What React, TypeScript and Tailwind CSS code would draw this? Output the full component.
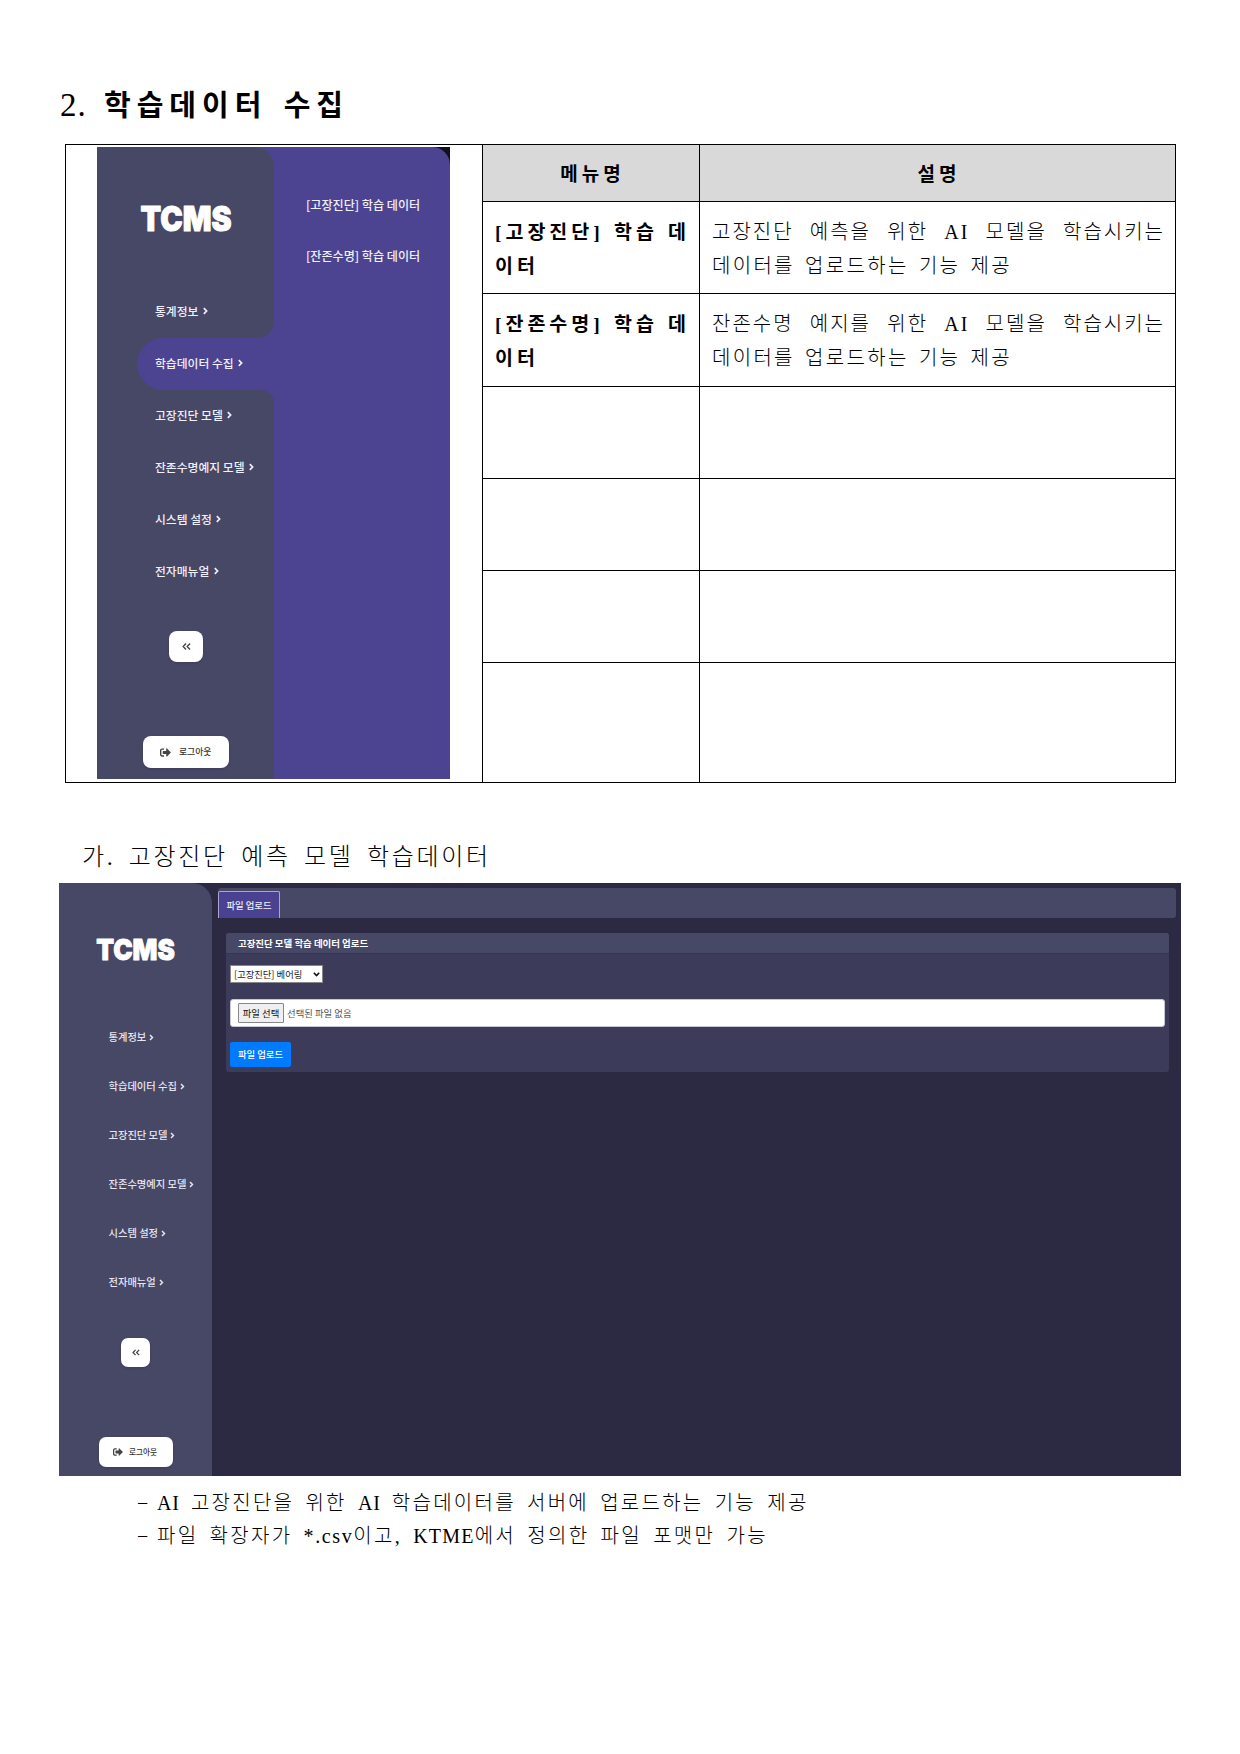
import React from "react";
import { FaSignOutAlt } from "react-icons/fa";

const MENU = ["통계정보", "학습데이터 수집", "고장진단 모델", "잔존수명예지 모델", "시스템 설정", "전자매뉴얼"];

function Chevron({ className }: { className: string }) {
  return (
    <svg viewBox="0 0 5 8" className={className} fill="none" stroke="currentColor" strokeWidth="1.7">
      <path d="M0.8 1.2 L3.6 4 L0.8 6.8" />
    </svg>
  );
}

function DoubleChevron({ className }: { className: string }) {
  return (
    <svg viewBox="0 0 9 7" className={className} fill="none" stroke="#444" strokeWidth="1.4">
      <path d="M4 0.6 L1.2 3.5 L4 6.4 M8 0.6 L5.2 3.5 L8 6.4" />
    </svg>
  );
}

function Logo({ className }: { className: string }) {
  return (
    <svg viewBox="0 0 96 44" className={`overflow-visible ${className}`}>
      <text
        x="2.5"
        y="34.5"
        textLength="91"
        lengthAdjust="spacingAndGlyphs"
        fill="#fff"
        stroke="#fff"
        strokeWidth="1"
        strokeLinejoin="round"
        fontFamily="Inter"
        fontWeight="900"
        fontSize="33.5"
      >
        TCMS
      </text>
    </svg>
  );
}

function MenuCapture() {
  return (
    <div className="ml-[31px] mt-[2px] flex h-[632px] w-[353px] bg-[#11111d] font-['Noto_Sans_CJK_KR',sans-serif]">
      <div className="flex h-full w-full rounded-tr-[18px] bg-[#4c4491]">
        <div className="flex h-full w-[177px] shrink-0 flex-col">
          <div className="h-[191px] rounded-tr-[20px] rounded-br-[16px] bg-[#474766] pl-[41px] pt-[49px]">
            <Logo className="h-[44px] w-[96px]" />
            <div className="mt-[61px] flex h-[20px] items-center gap-[4.5px] pl-[17px] text-[11.8px] font-medium leading-none text-[#f0f0fa]">
              {MENU[0]}
              <Chevron className="h-[8px] w-[5px]" />
            </div>
          </div>
          <div className="h-[52px] bg-[#474766]">
            <div className="ml-[40px] flex h-[52px] items-center gap-[4.5px] rounded-l-full bg-[#4c4491] pb-[2px] pl-[18px] text-[11.8px] font-medium leading-none text-[#f0f0fa]">
              {MENU[1]}
              <Chevron className="h-[8px] w-[5px]" />
            </div>
          </div>
          <div className="flex-1 rounded-tr-[14px] bg-[#474766]">
            {MENU.slice(2).map((m) => (
              <div
                key={m}
                className="flex h-[52px] items-center gap-[4.5px] pb-[2px] pl-[58px] text-[11.8px] font-medium leading-none text-[#f0f0fa]"
              >
                {m}
                <Chevron className="h-[8px] w-[5px]" />
              </div>
            ))}
            <div className="ml-[72px] mt-[33px] flex h-[31px] w-[34px] items-center justify-center rounded-[8px] bg-white shadow">
              <DoubleChevron className="h-[7px] w-[9px]" />
            </div>
            <div className="ml-[46px] mt-[74px] flex h-[32px] w-[86px] items-center rounded-[8px] bg-white pl-[17px] text-[8.8px] font-medium leading-none text-[#333] shadow">
              <FaSignOutAlt className="mr-[8px] h-[11px] w-[11px] text-[#444]" />
              로그아웃
            </div>
          </div>
        </div>
        <div className="pl-[32px] pt-[48px] text-[12.1px] font-medium leading-[20px] whitespace-nowrap text-[#f0f0fa]">
          <div>[고장진단] 학습 데이터</div>
          <div className="mt-[31px]">[잔존수명] 학습 데이터</div>
        </div>
      </div>
    </div>
  );
}

function UploadCapture() {
  return (
    <div className="ml-[59px] flex h-[593px] w-[1122px] bg-[#2b2a42] font-['Noto_Sans_CJK_KR',sans-serif]">
      <div className="h-full w-[153px] shrink-0 rounded-tr-[20px] bg-[#474766] pt-[47px]">
        <Logo className="ml-[35px] h-[38px] w-[83px]" />
        <div className="mt-[44.5px]">
          {MENU.map((m) => (
            <div
              key={m}
              className="flex h-[49.1px] items-center gap-[3px] pl-[49.5px] text-[10.28px] font-medium leading-none text-[#e6e6f2]"
            >
              {m}
              <Chevron className="h-[7px] w-[5px]" />
            </div>
          ))}
        </div>
        <div className="ml-[62px] mt-[31px] flex h-[29px] w-[29px] items-center justify-center rounded-[7px] bg-white shadow">
          <DoubleChevron className="h-[7px] w-[8px]" />
        </div>
        <div className="ml-[40px] mt-[70px] flex h-[30px] w-[74px] items-center rounded-[7px] bg-white pl-[14px] text-[7.6px] font-medium leading-none text-[#333] shadow">
          <FaSignOutAlt className="mr-[6px] h-[10px] w-[10px] text-[#444]" />
          로그아웃
        </div>
      </div>
      <div className="flex-1 pl-[6px] pr-[5px] pt-[5px]">
        <div className="flex h-[30px] items-end rounded-[3px] bg-[#474766]">
          <div className="flex h-[27px] w-[62px] items-center justify-center rounded-t-[2px] border border-b-0 border-[#a9a6d6] bg-[#4a4290] pt-[2px] text-[9.4px] font-medium leading-none text-[#ececf8]">
            파일 업로드
          </div>
        </div>
        <div className="ml-[8px] mr-[7px] mt-[15px] h-[139px] overflow-hidden rounded-[3px] bg-[#3c3b5a]">
          <div className="flex h-[21px] items-center border-b border-[#353452] bg-[#474766] pl-[12px] pt-[2px] text-[9.45px] font-bold leading-none text-white">
            고장진단 모델 학습 데이터 업로드
          </div>
          <div className="ml-[4px] mt-[11px] flex h-[18px] w-[93px] items-center justify-between border border-[#888] bg-white pl-[3px] pr-[2px] pt-[1px] text-[9.3px] leading-none text-[#222]">
            [고장진단] 베어링
            <svg viewBox="0 0 7 5" className="h-[5px] w-[7px]" fill="none" stroke="#111" strokeWidth="1.6">
              <path d="M0.8 0.8 L3.5 3.6 L6.2 0.8" />
            </svg>
          </div>
          <div className="mx-[4px] mt-[16px] flex h-[28px] items-center rounded-[3px] border border-[#c5c8d2] bg-white pl-[7px] text-[9.4px] leading-none text-[#555]">
            <span className="mr-[3px] flex h-[20px] w-[46px] items-center justify-center rounded-[1px] border border-[#888] bg-[#efefef] pt-[1px] text-[#111]">
              파일 선택
            </span>
            <span className="pt-[1px]">선택된 파일 없음</span>
          </div>
          <div className="ml-[4px] mt-[15px] flex h-[25px] w-[61px] items-center justify-center rounded-[2px] bg-[#007bff] pt-[1px] text-[9.4px] font-medium leading-none text-white">
            파일 업로드
          </div>
        </div>
      </div>
    </div>
  );
}

const ROWS = [
  { name: ["[고장진단] 학습 데", "이터"], desc: ["고장진단 예측을 위한 AI 모델을 학습시키는", "데이터를 업로드하는 기능 제공"] },
  { name: ["[잔존수명] 학습 데", "이터"], desc: ["잔존수명 예지를 위한 AI 모델을 학습시키는", "데이터를 업로드하는 기능 제공"] },
];

export default function App() {
  return (
    <div className="h-[1754px] w-[1240px] overflow-hidden bg-white pt-[80px] font-['Liberation_Serif','Noto_Sans_CJK_KR',serif] text-black">
      <h1 className="ml-[60px] flex h-[50px] items-center whitespace-nowrap leading-none">
        <span className="w-[44px] text-[33px] tracking-[1px]">2.</span>
        <span className="pt-[2px] text-[29px] font-bold tracking-[6px] [word-spacing:3px]">학습데이터 수집</span>
      </h1>
      <div className="ml-[65px] mt-[14px] grid h-[639px] w-[1111px] grid-cols-[417px_217px_476px] grid-rows-[57px_92px_93px_92px_92px_92px_120px] border-l border-t border-black leading-none">
        <div className="row-span-7 border-b border-r border-black">
          <MenuCapture />
        </div>
        <div className="flex items-center justify-center border-b border-r border-black bg-[#d9d9d9] pl-[3px] pt-[2px] text-[19px] font-bold tracking-[4px]">
          메뉴명
        </div>
        <div className="flex items-center justify-center border-b border-r border-black bg-[#d9d9d9] pl-[3px] pt-[2px] text-[19px] font-bold tracking-[4px]">
          설명
        </div>
        {ROWS.map((r) => (
          <React.Fragment key={r.name[0]}>
            <div className="border-b border-r border-black pl-[12px] pt-[14px] text-[19.5px] font-bold leading-[33.5px] whitespace-nowrap">
              <div className="w-[195px] tracking-[4px] [text-align-last:justify]">{r.name[0]}</div>
              <div className="tracking-[4px]">{r.name[1]}</div>
            </div>
            <div className="border-b border-r border-black pl-[12px] pt-[14px] text-[20px] font-light leading-[33.5px]">
              <div className="w-[453px] tracking-[2px] [text-align-last:justify]">{r.desc[0]}</div>
              <div className="tracking-[2.3px] [word-spacing:3px]">{r.desc[1]}</div>
            </div>
          </React.Fragment>
        ))}
        {Array.from({ length: 8 }, (_, i) => (
          <div key={i} className="border-b border-r border-black" />
        ))}
      </div>
      <h2 className="ml-[82px] mt-[59px] flex h-[30px] items-center whitespace-nowrap text-[24px] font-light leading-none tracking-[2.65px] [word-spacing:4.8px]">
        가. 고장진단 예측 모델 학습데이터
      </h2>
      <div className="mt-[11px]">
        <UploadCapture />
      </div>
      <div className="ml-[137px] mt-[10.5px] text-[20px] font-light leading-[33.5px] whitespace-nowrap [word-spacing:3.9px]">
        <div className="flex tracking-[2.27px]">
          <span className="w-[20px]">−</span>
          <span>
            <span className="tracking-[0.8px]">AI</span> 고장진단을 위한 <span className="tracking-[0.8px]">AI</span> 학습데이터를
            서버에 업로드하는 기능 제공
          </span>
        </div>
        <div className="flex tracking-[2.3px]">
          <span className="w-[20px]">−</span>
          <span>
            파일 확장자가 <span className="tracking-[1.6px]">*.csv</span>이고, <span className="tracking-[1.2px]">KTME</span>에서
            정의한 파일 포맷만 가능
          </span>
        </div>
      </div>
    </div>
  );
}
